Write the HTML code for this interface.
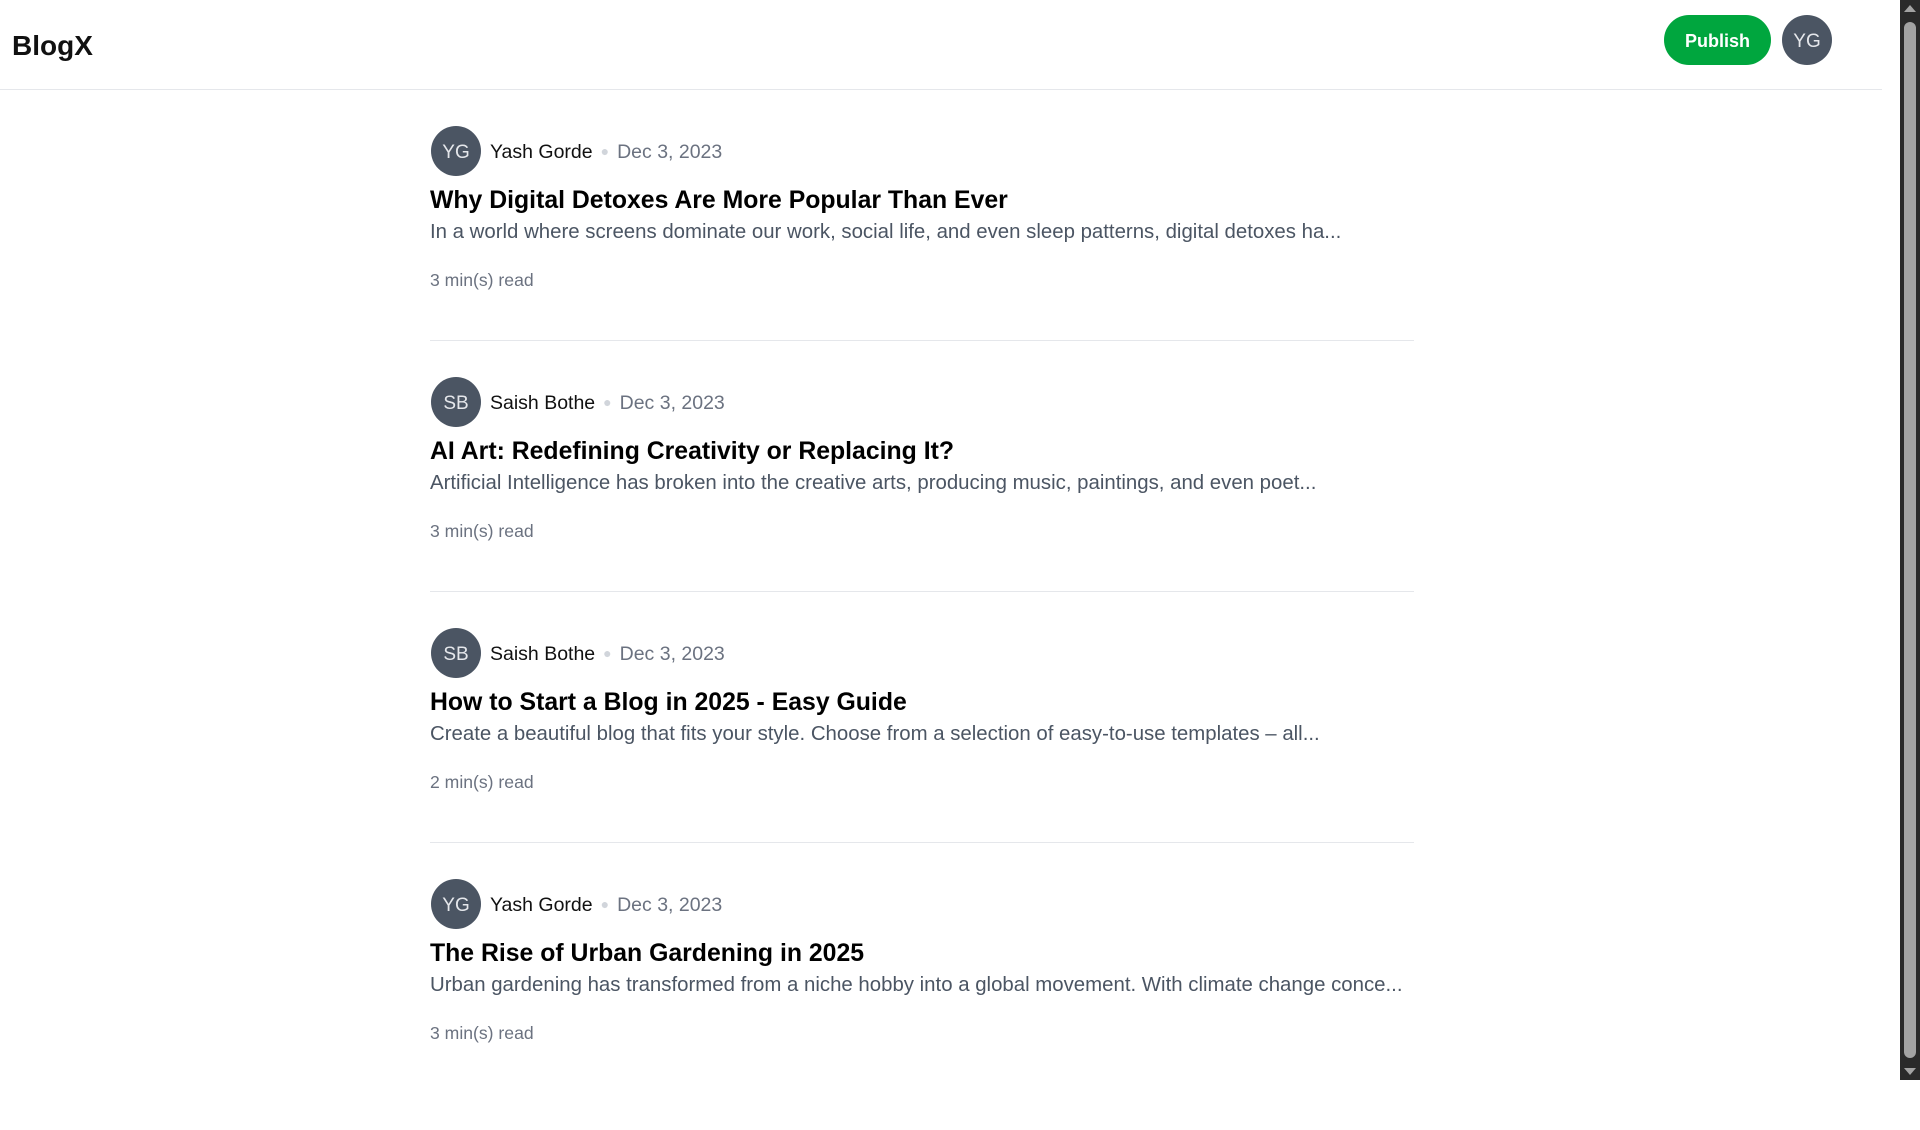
<!DOCTYPE html>
<html><head><meta charset="utf-8"><style>
*{margin:0;padding:0;box-sizing:border-box}
body{width:1920px;height:1080px;overflow:hidden;background:#fff;font-family:"Liberation Sans",sans-serif;position:relative}
.hdr{position:absolute;left:0;top:0;width:1882px;height:90px;border-bottom:1px solid #e5e7eb}
.logo{position:absolute;left:12px;top:30px;font-size:28px;font-weight:bold;color:#111}
.pub{position:absolute;left:1664px;top:15px;width:107px;height:50px;border-radius:25px;background:#00a63e;color:#fff;font-weight:bold;font-size:18px;text-align:center;line-height:52px}
.av{position:absolute;width:50px;height:50px;border-radius:50%;background:#4b5563;color:#e5e7eb;font-size:19px;text-align:center;line-height:53px}
.art{position:absolute;left:430px;width:984px;height:251px}
.art .av{left:1px;top:0}
.name{position:absolute;left:60px;top:15px;font-size:19.5px;color:#111}
.dot{color:#d1d5db;margin:0 8px;font-size:14px;vertical-align:2px}
.date{color:#6b7280}
.ttl{position:absolute;left:0;top:61px;font-size:24.8px;font-weight:bold;color:#000;white-space:nowrap}
.desc{position:absolute;left:0;top:95px;font-size:20.4px;color:#4b5563;white-space:nowrap}
.rd{position:absolute;left:0;top:144px;font-size:17.6px;color:#6b7280}
.hr{position:absolute;left:0;top:214px;width:984px;height:1px;background:#e5e7eb}
.sb{position:absolute;left:1900px;top:0;width:20px;height:1080px;background:#2a2a2a}
.th{position:absolute;left:4px;top:22px;width:12px;height:1036px;border-radius:6px;background:#a3a3a3}
.ar{position:absolute;left:4px;width:0;height:0;border-left:6px solid transparent;border-right:6px solid transparent}
</style></head><body>
<div class="hdr"><div class="logo">BlogX</div></div>
<div class="pub">Publish</div>
<div class="av" style="left:1782px;top:15px">YG</div>

<div class="art" style="top:126px"><div class="av">YG</div>
<div class="name">Yash Gorde<span class="dot">●</span><span class="date">Dec 3, 2023</span></div>
<div class="ttl">Why Digital Detoxes Are More Popular Than Ever</div>
<div class="desc">In a world where screens dominate our work, social life, and even sleep patterns, digital detoxes ha...</div>
<div class="rd">3 min(s) read</div><div class="hr"></div></div>

<div class="art" style="top:377px"><div class="av">SB</div>
<div class="name">Saish Bothe<span class="dot">●</span><span class="date">Dec 3, 2023</span></div>
<div class="ttl">AI Art: Redefining Creativity or Replacing It?</div>
<div class="desc">Artificial Intelligence has broken into the creative arts, producing music, paintings, and even poet...</div>
<div class="rd">3 min(s) read</div><div class="hr"></div></div>

<div class="art" style="top:628px"><div class="av">SB</div>
<div class="name">Saish Bothe<span class="dot">●</span><span class="date">Dec 3, 2023</span></div>
<div class="ttl">How to Start a Blog in 2025 - Easy Guide</div>
<div class="desc">Create a beautiful blog that fits your style. Choose from a selection of easy-to-use templates – all...</div>
<div class="rd">2 min(s) read</div><div class="hr"></div></div>

<div class="art" style="top:879px"><div class="av">YG</div>
<div class="name">Yash Gorde<span class="dot">●</span><span class="date">Dec 3, 2023</span></div>
<div class="ttl">The Rise of Urban Gardening in 2025</div>
<div class="desc">Urban gardening has transformed from a niche hobby into a global movement. With climate change conce...</div>
<div class="rd">3 min(s) read</div></div>

<div class="sb"><div class="ar" style="top:5px;border-bottom:7px solid #a3a3a3"></div><div class="th"></div><div class="ar" style="top:1068px;border-top:7px solid #a3a3a3"></div></div>
</body></html>
